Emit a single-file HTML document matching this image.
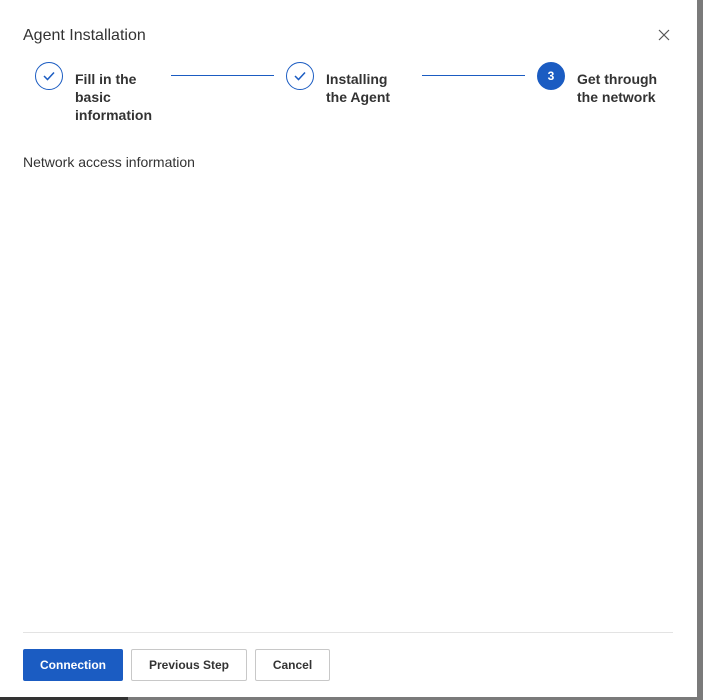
<!DOCTYPE html>
<html><head><meta charset="utf-8"><style>
*{margin:0;padding:0;box-sizing:border-box}
body{width:703px;height:700px;background:#7a7a7a;position:relative;overflow:hidden;font-family:"Liberation Sans",Arial,sans-serif;color:#333}
.dlg{position:absolute;left:0;top:0;width:697px;height:697px;background:#fff}
.dark{position:absolute;left:0;top:697px;width:128px;height:3px;background:#333}
.title{position:absolute;left:23px;top:27px;font-size:16px;color:#333}
.x{position:absolute;left:658px;top:29px}
.circ{position:absolute;width:28px;height:28px;border-radius:50%;border:1px solid #1b5cc2;display:flex;align-items:center;justify-content:center}
.circ.on{background:#1b5cc2;color:#fff;font-size:12px;font-weight:bold}
.lbl{position:absolute;font-size:14px;font-weight:bold;line-height:18px;color:#333}
.line{position:absolute;top:75px;height:1px;background:#1b5cc2}
.h{position:absolute;left:23px;top:154px;font-size:14px;color:#333}
.sep{position:absolute;left:23px;top:632px;width:650px;height:1px;background:#e3e3e3}
.btn{position:absolute;top:649px;height:32px;font-size:12px;font-weight:bold;display:flex;align-items:center;justify-content:center;border-radius:2px}
.pri{background:#1b5cc2;color:#fff}
.sec{border:1px solid #c8c8c8;color:#333;background:#fff}
</style></head><body>
<div class="dlg">
<div class="title">Agent Installation</div>
<svg class="x" width="12" height="12" viewBox="0 0 12 12"><path d="M1 1L11 11M11 1L1 11" stroke="#555" stroke-width="1.2"/></svg>
<div class="circ" style="left:35px;top:62px"><svg width="12" height="10" viewBox="0 0 12 10"><path d="M1 5L4.5 8.5L11 1.5" fill="none" stroke="#1b5cc2" stroke-width="1.5"/></svg></div>
<div class="lbl" style="left:75px;top:70px">Fill in the<br>basic<br>information</div>
<div class="line" style="left:171px;width:103px"></div>
<div class="circ" style="left:286px;top:62px"><svg width="12" height="10" viewBox="0 0 12 10"><path d="M1 5L4.5 8.5L11 1.5" fill="none" stroke="#1b5cc2" stroke-width="1.5"/></svg></div>
<div class="lbl" style="left:326px;top:70px">Installing<br>the Agent</div>
<div class="line" style="left:422px;width:103px"></div>
<div class="circ on" style="left:537px;top:62px">3</div>
<div class="lbl" style="left:577px;top:70px">Get through<br>the network</div>
<div class="h">Network access information</div>
<div class="sep"></div>
<div class="btn pri" style="left:23px;width:100px">Connection</div>
<div class="btn sec" style="left:131px;width:116px">Previous Step</div>
<div class="btn sec" style="left:255px;width:75px">Cancel</div>
</div>
<div class="dark"></div>
</body></html>
